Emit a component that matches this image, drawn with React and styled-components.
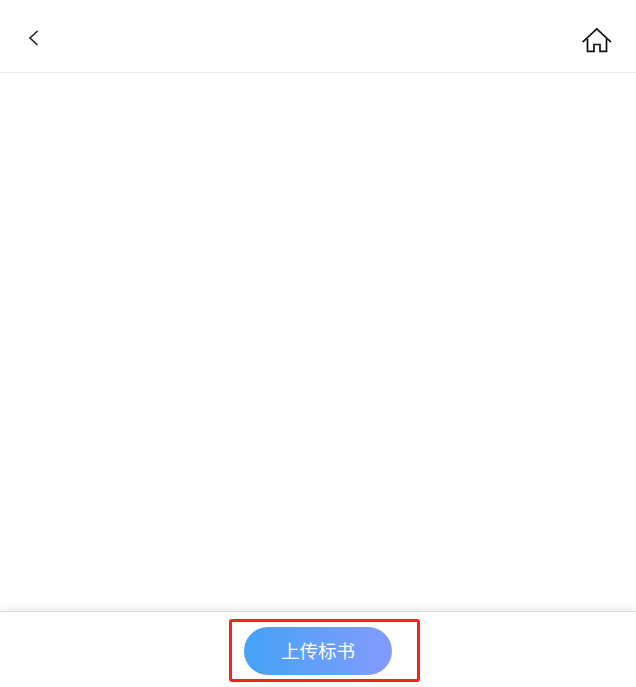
import React from 'react';
import styled, { createGlobalStyle } from 'styled-components';

const GlobalStyle = createGlobalStyle`
  html, body, #root {
    margin: 0;
    height: 100%;
  }
  body {
    background: #fff;
    font-family: 'Liberation Serif', 'Noto Sans CJK SC', serif;
  }
`;

const Page = styled.div`
  height: 687px;
  display: flex;
  flex-direction: column;
  overflow: hidden;
`;

const Header = styled.header`
  height: 72px;
  flex-shrink: 0;
  display: flex;
  align-items: center;
  justify-content: space-between;
  padding: 0 24px 0 26px;
  border-bottom: 1px solid #ebebeb;
  box-sizing: content-box;
`;

const IconButton = styled.button`
  padding: 0;
  margin-top: ${props => props.$offset}px;
  border: none;
  background: none;
  display: flex;
  cursor: pointer;
`;

const Content = styled.main`
  flex: 1;
  background: #fff;
`;

const Footer = styled.footer`
  height: 76px;
  flex-shrink: 0;
  display: flex;
  justify-content: center;
  padding-top: 15px;
  box-sizing: border-box;
  border-top: 1px solid #dedee4;
  box-shadow: 0 -3px 6px rgba(120, 120, 140, 0.12);
`;

const Marked = styled.div`
  position: relative;
`;

const Highlight = styled.div`
  position: absolute;
  left: -15px;
  top: -8px;
  width: 191px;
  height: 63px;
  box-sizing: border-box;
  border: 3px solid #f5231c;
  border-radius: 3px;
  pointer-events: none;
`;

const UploadButton = styled.button`
  width: 148px;
  height: 48px;
  padding: 0 0 2px;
  border: none;
  border-radius: 24px;
  background: linear-gradient(90deg, #44a2f5, #849bff);
  color: #fff;
  font-family: inherit;
  font-size: 18.5px;
  cursor: pointer;
`;

export default function App() {
  return (
    <Page>
      <GlobalStyle />
      <Header>
        <IconButton aria-label="返回" $offset={4}>
          <svg width="14" height="20" viewBox="0 0 14 20" fill="none" stroke="#222" strokeWidth="1.6">
            <path d="M11.5 3L4 10L11.5 17" />
          </svg>
        </IconButton>
        <IconButton aria-label="首页" $offset={8}>
          <svg width="30" height="26" viewBox="0 0 30 26" fill="none" stroke="#111" strokeWidth="1.7">
            <path d="M0.6 15.2L14.8 2L29 15.2" />
            <path d="M5.5 12V24.4H12V17.5H18V24.4H24.5V12" />
          </svg>
        </IconButton>
      </Header>
      <Content />
      <Footer>
        <Marked>
          <UploadButton>上传标书</UploadButton>
          <Highlight />
        </Marked>
      </Footer>
    </Page>
  );
}
